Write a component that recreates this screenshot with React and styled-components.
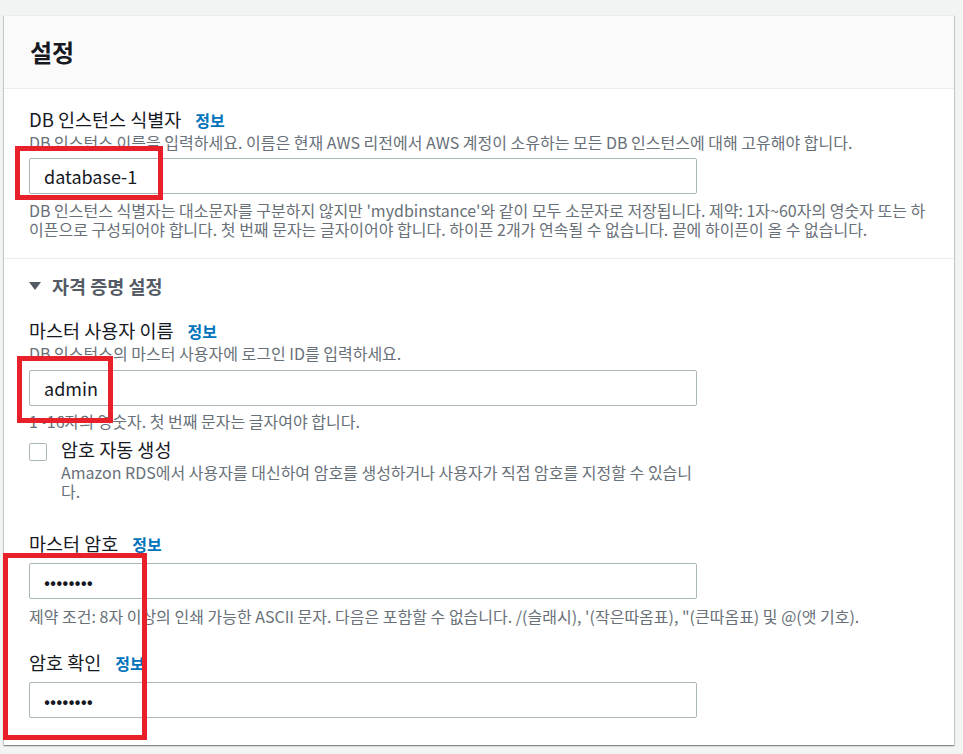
import React from 'react';
import styled, { createGlobalStyle } from 'styled-components';

const GlobalStyle = createGlobalStyle`
  html, body {
    margin: 0;
    padding: 0;
    background: #f2f3f3;
    font-family: "Noto Sans CJK KR", "Noto Sans", sans-serif;
    color: #16191f;
  }
`;

const Page = styled.div`
  position: relative;
  width: 963px;
  height: 754px;
  padding: 15px 9px 0 4px;
  box-sizing: border-box;
  overflow: hidden;
`;

const Card = styled.div`
  background: #ffffff;
  border-top: 1px solid #eaeded;
  box-shadow: 0 1px 1px 0 rgba(0, 28, 36, 0.3), 1px 1px 1px 0 rgba(0, 28, 36, 0.15),
    -1px 1px 1px 0 rgba(0, 28, 36, 0.15);
`;

const Header = styled.div`
  height: 72px;
  display: flex;
  align-items: center;
  padding: 0 26px;
  background: #fafafa;
  border-bottom: 1px solid #eaeded;
`;

const Title = styled.h2`
  margin: 0;
  font-size: 24px;
  font-weight: 700;
  line-height: 28px;
  color: #16191f;
`;

const Section = styled.div`
  padding: ${(p) => p.$pad};
  border-top: ${(p) => (p.$divider ? '1px solid #eaeded' : 'none')};
  display: flex;
  flex-direction: column;
`;

const LabelRow = styled.div`
  display: flex;
  align-items: center;
  gap: 14px;
  margin-top: ${(p) => p.$mt || 0}px;
  height: 22px;
`;

const Label = styled.span`
  font-size: 18.5px;
  line-height: 22px;
  color: #16191f;
`;

const Info = styled.a`
  font-size: 16px;
  font-weight: 700;
  color: #0073bb;
  text-decoration: none;
  line-height: 22px;
  margin-top: 2px;
`;

const Desc = styled.div`
  font-size: 16px;
  line-height: 19px;
  color: #687078;
  margin-top: ${(p) => p.$mt || 0}px;
  max-width: ${(p) => p.$max || 'none'};
`;

const Input = styled.input`
  box-sizing: border-box;
  width: 668px;
  height: 36px;
  margin-top: ${(p) => p.$mt || 0}px;
  padding: 0 14px;
  border: 1px solid #aab7b8;
  border-radius: 2px;
  background: #fff;
  font-family: "Noto Sans CJK KR", "Noto Sans", sans-serif;
  font-size: 18px;
  color: #16191f;
  outline: none;
`;

const Expander = styled.div`
  display: flex;
  align-items: center;
  gap: 11px;
  height: 22px;
  font-size: 18.5px;
  font-weight: 700;
  color: #545b64;
`;

const CheckRow = styled.div`
  display: flex;
  align-items: flex-start;
  gap: 14px;
  margin-top: 7px;
`;

const Box = styled.span`
  flex: none;
  width: 16px;
  height: 16px;
  margin-top: 5px;
  border: 1px solid #aab7b8;
  border-radius: 2px;
  background: #fff;
`;

const CheckText = styled.div`
  display: flex;
  flex-direction: column;
`;

const Marker = styled.div`
  position: absolute;
  border: 5px solid #e8202a;
  box-sizing: border-box;
  pointer-events: none;
`;

const Field = ({ label, mt, desc, children }) => (
  <>
    <LabelRow $mt={mt}>
      <Label>{label}</Label>
      <Info href="#">정보</Info>
    </LabelRow>
    {desc && <Desc $mt={3}>{desc}</Desc>}
    {children}
  </>
);

export default function App() {
  return (
    <>
      <GlobalStyle />
      <Page>
        <Card>
          <Header>
            <Title>설정</Title>
          </Header>
          <Section $pad="19px 26px 19px 25px">
            <Field label="DB 인스턴스 식별자" mt={0} desc="DB 인스턴스 이름을 입력하세요. 이름은 현재 AWS 리전에서 AWS 계정이 소유하는 모든 DB 인스턴스에 대해 고유해야 합니다.">
              <Input $mt={6} defaultValue="database-1" readOnly />
              <Desc $mt={7}>
                DB 인스턴스 식별자는 대소문자를 구분하지 않지만 'mydbinstance'와 같이 모두 소문자로 저장됩니다. 제약: 1자~60자의 영숫자 또는 하이픈으로 구성되어야 합니다. 첫 번째 문자는 글자이어야 합니다. 하이픈 2개가 연속될 수 없습니다. 끝에 하이픈이 올 수 없습니다.
              </Desc>
            </Field>
          </Section>
          <Section $divider $pad="16px 26px 27px 25px">
            <Expander>
              <svg width="12" height="9" viewBox="0 0 12 9">
                <path d="M0 0 H12 L6 8 Z" fill="#545b64" />
              </svg>
              자격 증명 설정
            </Expander>
            <Field label="마스터 사용자 이름" mt={22} desc="DB 인스턴스의 마스터 사용자에 로그인 ID를 입력하세요.">
              <Input $mt={7} defaultValue="admin" readOnly />
              <Desc $mt={6}>1~16자의 영숫자. 첫 번째 문자는 글자여야 합니다.</Desc>
            </Field>
            <CheckRow>
              <Box />
              <CheckText>
                <Label>암호 자동 생성</Label>
                <Desc $mt={3} $max="637px">
                  Amazon RDS에서 사용자를 대신하여 암호를 생성하거나 사용자가 직접 암호를 지정할 수 있습니다.
                </Desc>
              </CheckText>
            </CheckRow>
            <Field label="마스터 암호" mt={31}>
              <Input $mt={9} type="password" defaultValue="abcdefgh" readOnly />
              <Desc $mt={8}>
                제약 조건: 8자 이상의 인쇄 가능한 ASCII 문자. 다음은 포함할 수 없습니다. /(슬래시), '(작은따옴표), "(큰따옴표) 및 @(앳 기호).
              </Desc>
            </Field>
            <Field label="암호 확인" mt={25}>
              <Input $mt={9} type="password" defaultValue="abcdefgh" readOnly />
            </Field>
          </Section>
        </Card>
        <Marker style={{ left: 15, top: 146, width: 148, height: 54 }} />
        <Marker style={{ left: 17, top: 356, width: 96, height: 67 }} />
        <Marker style={{ left: 3, top: 553, width: 144, height: 187 }} />
      </Page>
    </>
  );
}
